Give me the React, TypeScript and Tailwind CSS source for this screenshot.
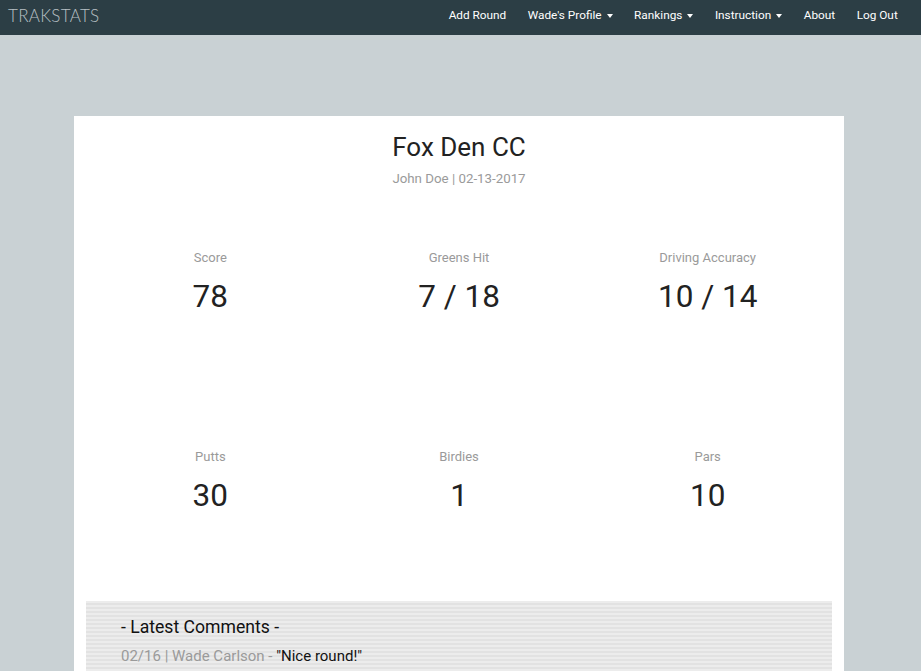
import React from "react";

const Caret = () => (
  <span className="ml-[5px] inline-block w-0 h-0 border-l-[3.5px] border-r-[3.5px] border-t-[4px] border-l-transparent border-r-transparent border-t-white align-middle" />
);

const stats = [
  { label: "Score", value: "78" },
  { label: "Greens Hit", value: "7 / 18" },
  { label: "Driving Accuracy", value: "10 / 14" },
  { label: "Putts", value: "30" },
  { label: "Birdies", value: "1" },
  { label: "Pars", value: "10" },
];

export default function App() {
  return (
    <div className="min-h-[671px] bg-[#c9d1d4] font-['Roboto',sans-serif]">
      <nav className="h-[35px] bg-[#2c3e45] flex items-center justify-between pb-[4px]">
        <div className="pl-[8px] text-[17px] font-light text-[#b8c0c4] tracking-[0.3px] font-['Lato',sans-serif]">
          TRAKSTATS
        </div>
        <ul className="flex items-center text-[11.8px] text-white pr-[12.5px]">
          <li className="px-[10.75px]">Add Round</li>
          <li className="px-[10.75px]">Wade's Profile<Caret /></li>
          <li className="px-[10.75px]">Rankings<Caret /></li>
          <li className="px-[10.75px]">Instruction<Caret /></li>
          <li className="px-[10.75px]">About</li>
          <li className="px-[10.75px]">Log Out</li>
        </ul>
      </nav>
      <div className="pt-[81px] px-[74px]">
        <div className="bg-white w-[770px] px-[12px] pt-[15px]">
          <h1 className="text-center text-[26px] leading-[32px] text-[#222]">Fox Den CC</h1>
          <p className="mt-[7px] text-center text-[13.3px] leading-[18px] text-[#9a9a9a]">
            John Doe | 02-13-2017
          </p>
          <div className="mt-[62px] grid grid-cols-3 gap-y-[132px]">
            {stats.map((s) => (
              <div key={s.label} className="text-center">
                <div className="text-[13px] leading-[16px] text-[#9a9a9a]">{s.label}</div>
                <div className="mt-[11px] text-[31.5px] leading-[40px] text-[#222]">{s.value}</div>
              </div>
            ))}
          </div>
          <div className="mt-[85px] h-[70px] pl-[35px] pt-[14px] bg-[#ececec] bg-[repeating-linear-gradient(to_bottom,#ececec_0px,#ececec_2px,#e2e2e2_2px,#e2e2e2_4px)]">
            <h2 className="text-[17.6px] leading-[24px] text-[#111]">- Latest Comments -</h2>
            <p className="mt-[7px] text-[15px] leading-[20px]">
              <span className="text-[#9a9a9a]">02/16 | Wade Carlson - </span>
              <span className="text-[#111]">"Nice round!"</span>
            </p>
          </div>
        </div>
      </div>
    </div>
  );
}
